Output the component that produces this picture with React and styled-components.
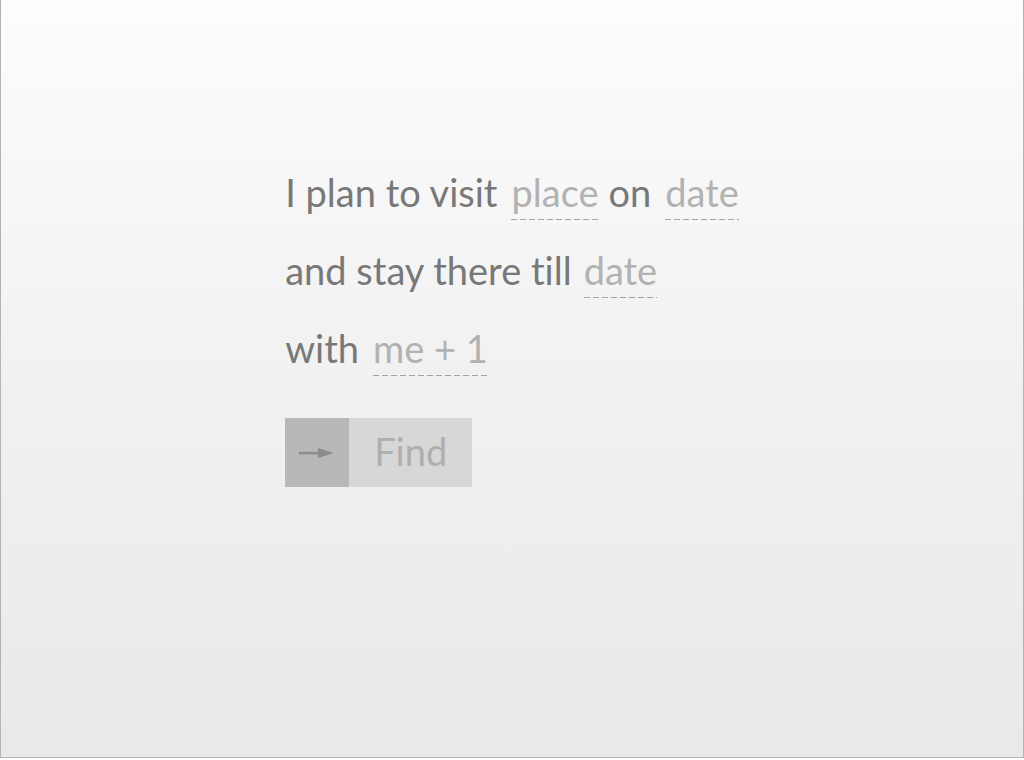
import React from 'react'
import styled, { createGlobalStyle } from 'styled-components'

const Global = createGlobalStyle`
  html, body {
    margin: 0;
    padding: 0;
  }
  body {
    font-family: Lato, "Open Sans", sans-serif;
    font-variant-ligatures: none;
  }
`

const Page = styled.div`
  box-sizing: border-box;
  width: 1024px;
  height: 758px;
  border: 1px solid #b3b3b3;
  border-top: none;
  background: linear-gradient(to bottom, #fdfdfd 0%, #f1f1f1 50%, #e9e9e9 100%);
  display: flex;
  justify-content: center;
  padding-top: 169px;
`

const Form = styled.form`
  display: flex;
  flex-direction: column;
  align-items: flex-start;
`

const Line = styled.div`
  display: flex;
  align-items: baseline;
  height: 78px;
  font-size: 38px;
  color: #787878;

  & > *:last-child {
    margin-right: 0;
  }
`

const Word = styled.span`
  margin-right: ${({ gap }) => gap || 14}px;
`

const Field = styled.span`
  color: #b2b2b2;
  padding-bottom: 5px;
  margin-right: ${({ gap }) => gap || 10}px;
  background-image: repeating-linear-gradient(to right, #a3a3a3 0 6px, transparent 6px 9px);
  background-size: 100% 1px;
  background-repeat: no-repeat;
  background-position: left bottom;
`

const Button = styled.button`
  margin-top: 15px;
  display: flex;
  padding: 0;
  border: none;
  height: 69px;
  font-family: inherit;
  cursor: pointer;
`

const IconPart = styled.span`
  width: 64px;
  background: #b8b8b8;
  display: flex;
  align-items: center;
  justify-content: center;
`

const Label = styled.span`
  width: 123px;
  background: #d7d7d7;
  color: #afafaf;
  font-size: 38px;
  padding-bottom: 4px;
  display: flex;
  align-items: center;
  justify-content: center;
`

const Arrow = () => (
  <svg width="36" height="12" viewBox="0 0 36 12">
    <rect x="0" y="4.8" width="22" height="2.6" fill="#8c8c8c" />
    <polygon points="19,1 35,6 19,11" fill="#8c8c8c" />
  </svg>
)

export default function App() {
  return (
    <>
      <Global />
      <Page>
        <Form onSubmit={(e) => e.preventDefault()}>
          <Line>
            <Word>I plan to visit</Word>
            <Field gap={10}>place</Field>
            <Word>on</Word>
            <Field>date</Field>
          </Line>
          <Line>
            <Word gap={12}>and stay there till</Word>
            <Field>date</Field>
          </Line>
          <Line>
            <Word>with</Word>
            <Field>me + 1</Field>
          </Line>
          <Button type="submit">
            <IconPart><Arrow /></IconPart>
            <Label>Find</Label>
          </Button>
        </Form>
      </Page>
    </>
  )
}
